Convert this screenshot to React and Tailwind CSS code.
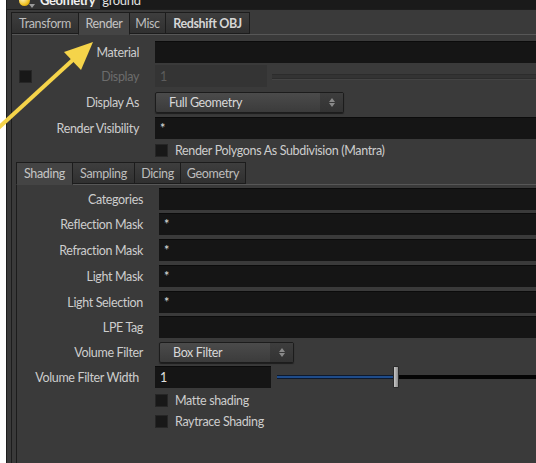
import React from "react";

function Label({ children, w, dim }) {
  return (
    <div
      className={`shrink-0 text-right pt-[2px] ${dim ? "text-[#6c6c6c]" : "text-[#cdcdcd]"}`}
      style={{ width: w }}
    >
      {children}
    </div>
  );
}

function Field({ children, className = "" }) {
  return (
    <div
      className={`h-[22px] bg-[#151515] border-t border-[#0b0b0b] flex items-center pl-[5px] pt-[2px] text-[#e0e0e0] ${className}`}
    >
      {children}
    </div>
  );
}

function Check() {
  return <div className="w-[13px] h-[13px] bg-[#181818] border border-[#262626] shrink-0" />;
}

function Dropdown({ text, w }) {
  return (
    <div
      className="h-[21px] flex border border-[#1c1c1c] rounded-[2px] bg-gradient-to-b from-[#4b4b4b] to-[#3b3b3b] shadow-[0_1px_1px_rgba(0,0,0,0.5)]"
      style={{ width: w }}
    >
      <div className="flex-1 flex items-center pl-[13px] pt-[2px] text-[#d8d8d8]">{text}</div>
      <div className="w-[23px] flex flex-col items-center justify-center bg-gradient-to-b from-[#3d3d3d] to-[#333333] gap-[1px]">
        <div className="w-0 h-0 border-l-[3px] border-r-[3px] border-b-[4px] border-l-transparent border-r-transparent border-b-[#8a8a8a]" />
        <div className="w-0 h-0 border-l-[3px] border-r-[3px] border-t-[4px] border-l-transparent border-r-transparent border-t-[#8a8a8a]" />
      </div>
    </div>
  );
}

function Tab({ children, selected, bold, w }) {
  return (
    <div
      className={`h-[22px] flex items-center justify-center pt-[2px] border border-[#1c1c1c] -mr-[1px] ${
        selected
          ? "bg-[#444444] border-b-transparent relative z-10 h-[23px] -mb-[1px] text-[#c4c4c4]"
          : "bg-gradient-to-b from-[#3e3e3e] to-[#303030] text-[#bdbdbd]"
      } ${bold ? "font-bold text-[#d6d6d6]" : ""}`}
      style={{ width: w }}
    >
      {children}
    </div>
  );
}

export default function App() {
  return (
    <div className="relative w-[536px] h-[463px] overflow-hidden bg-white flex text-[12.5px] tracking-[-0.35px] leading-none font-['Lato',sans-serif]">
      <div className="ml-[6px] flex-1 flex flex-col border-l border-[#1e1e1e] bg-[#3a3a3a]">
        {/* title bar (cut off at the top) */}
        <div className="h-[10px] overflow-hidden bg-[#333333] border-b border-[#1d1d1d] shrink-0">
          <div className="-mt-[9px] h-[19px] flex items-center">
            <div className="ml-[12px] w-[11px] h-[11px] rounded-full bg-[radial-gradient(circle_at_35%_35%,#fff6c0,#f0c020_60%,#a07a00)]" />
            <div className="ml-[-1px] mt-[10px] w-0 h-0 border-l-[3px] border-r-[3px] border-t-[4px] border-l-transparent border-r-transparent border-t-[#9a9a9a]" />
            <div className="ml-[5px] font-bold text-[#f0f0f0] text-[13px]">Geometry</div>
            <div className="ml-[5px] flex-1 h-full bg-[#1a1a1a] text-[#e0e0e0] text-[13px] flex items-center pl-[2px]">ground</div>
          </div>
        </div>
        {/* main tab widget */}
        <div className="flex-1 flex flex-col pl-[4px] pt-[2px]">
          <div className="flex-1 flex flex-col border-l border-[#1c1c1c]">
            <div className="flex items-end h-[22px] -ml-[1px]">
              <Tab w={68}>Transform</Tab>
              <Tab w={52} selected>Render</Tab>
              <Tab w={37}>Misc</Tab>
              <Tab w={85} bold>Redshift OBJ</Tab>
            </div>
            <div className="flex-1 flex flex-col border-t border-[#575757] bg-[#3a3a3a]">
              {/* Material */}
              <div className="flex items-center mt-[6px] h-[22px]">
                <Label w={127}>Material</Label>
                <Field className="ml-[16px] flex-1" />
              </div>
              {/* Display */}
              <div className="flex items-center mt-[2px] h-[22px] relative">
                <div className="absolute left-[7px] top-[5px]">
                  <Check />
                </div>
                <Label w={127} dim>Display</Label>
                <div className="ml-[16px] w-[112px] h-[22px] bg-[#343434] flex items-center pl-[5px] pt-[2px] text-[#5c5c5c]">1</div>
                <div className="flex-1 ml-[5px] h-[5px] bg-[#333333] border-t border-b border-[#2c2c2c] shadow-[0_1px_0_#444]" />
              </div>
              {/* Display As */}
              <div className="flex items-center mt-[4px] h-[22px]">
                <Label w={127}>Display As</Label>
                <div className="ml-[16px]">
                  <Dropdown text="Full Geometry" w={189} />
                </div>
              </div>
              {/* Render Visibility */}
              <div className="flex items-center mt-[4px] h-[22px]">
                <Label w={127}>Render Visibility</Label>
                <Field className="ml-[16px] flex-1">*</Field>
              </div>
              {/* checkbox */}
              <div className="flex items-center mt-[5px] h-[13px] pl-[143px] gap-[7px]">
                <Check />
                <span className="text-[#cdcdcd] pt-[2px]">Render Polygons As Subdivision (Mantra)</span>
              </div>
              {/* inner tabs */}
              <div className="flex-1 flex flex-col mt-[5px] ml-[4px] border-l border-[#1c1c1c]">
                <div className="flex items-end h-[22px] -ml-[1px]">
                  <Tab w={57} selected>Shading</Tab>
                  <Tab w={63}>Sampling</Tab>
                  <Tab w={47}>Dicing</Tab>
                  <Tab w={66}>Geometry</Tab>
                </div>
                <div className="flex-1 flex flex-col border-t border-[#575757] bg-[#3a3a3a]">
                  <div className="flex items-center mt-[3px] h-[22px]">
                    <Label w={126}>Categories</Label>
                    <Field className="ml-[16px] flex-1" />
                  </div>
                  <div className="flex items-center mt-[3px] h-[22px]">
                    <Label w={126}>Reflection Mask</Label>
                    <Field className="ml-[16px] flex-1">*</Field>
                  </div>
                  <div className="flex items-center mt-[4px] h-[22px]">
                    <Label w={126}>Refraction Mask</Label>
                    <Field className="ml-[16px] flex-1">*</Field>
                  </div>
                  <div className="flex items-center mt-[4px] h-[22px]">
                    <Label w={126}>Light Mask</Label>
                    <Field className="ml-[16px] flex-1">*</Field>
                  </div>
                  <div className="flex items-center mt-[4px] h-[22px]">
                    <Label w={126}>Light Selection</Label>
                    <Field className="ml-[16px] flex-1">*</Field>
                  </div>
                  <div className="flex items-center mt-[3px] h-[22px]">
                    <Label w={126}>LPE Tag</Label>
                    <Field className="ml-[16px] flex-1" />
                  </div>
                  <div className="flex items-center mt-[3px] h-[22px]">
                    <Label w={126}>Volume Filter</Label>
                    <div className="ml-[16px]">
                      <Dropdown text="Box Filter" w={135} />
                    </div>
                  </div>
                  <div className="flex items-center mt-[3px] h-[22px]">
                    <Label w={122}>Volume Filter Width</Label>
                    <Field className="ml-[16px] w-[116px]">1</Field>
                    <div className="flex-1 ml-[6px] relative h-[22px] flex items-center">
                      <div className="w-[116px] h-[4px] bg-[#1f4c8a] border-t border-b border-[#0e1a2e]" />
                      <div className="w-[6px] h-[22px] bg-gradient-to-r from-[#c8c8c8] to-[#8c8c8c] border border-[#2a2a2a] rounded-[1px]" />
                      <div className="flex-1 h-[4px] bg-[#050505]" />
                    </div>
                  </div>
                  <div className="flex items-center mt-[6px] h-[13px] pl-[138px] gap-[7px]">
                    <Check />
                    <span className="text-[#cdcdcd] pt-[2px]">Matte shading</span>
                  </div>
                  <div className="flex items-center mt-[8px] h-[13px] pl-[138px] gap-[7px]">
                    <Check />
                    <span className="text-[#cdcdcd] pt-[2px]">Raytrace Shading</span>
                  </div>
                </div>
              </div>
            </div>
          </div>
        </div>
      </div>
      {/* annotation arrow */}
      <svg className="absolute left-0 top-0 pointer-events-none" width="536" height="463">
        <line x1="-6" y1="132" x2="76" y2="57" stroke="#f5d44a" strokeWidth="4" />
        <polygon points="93,42 64,52 81,70" fill="#f5d44a" />
      </svg>
    </div>
  );
}
